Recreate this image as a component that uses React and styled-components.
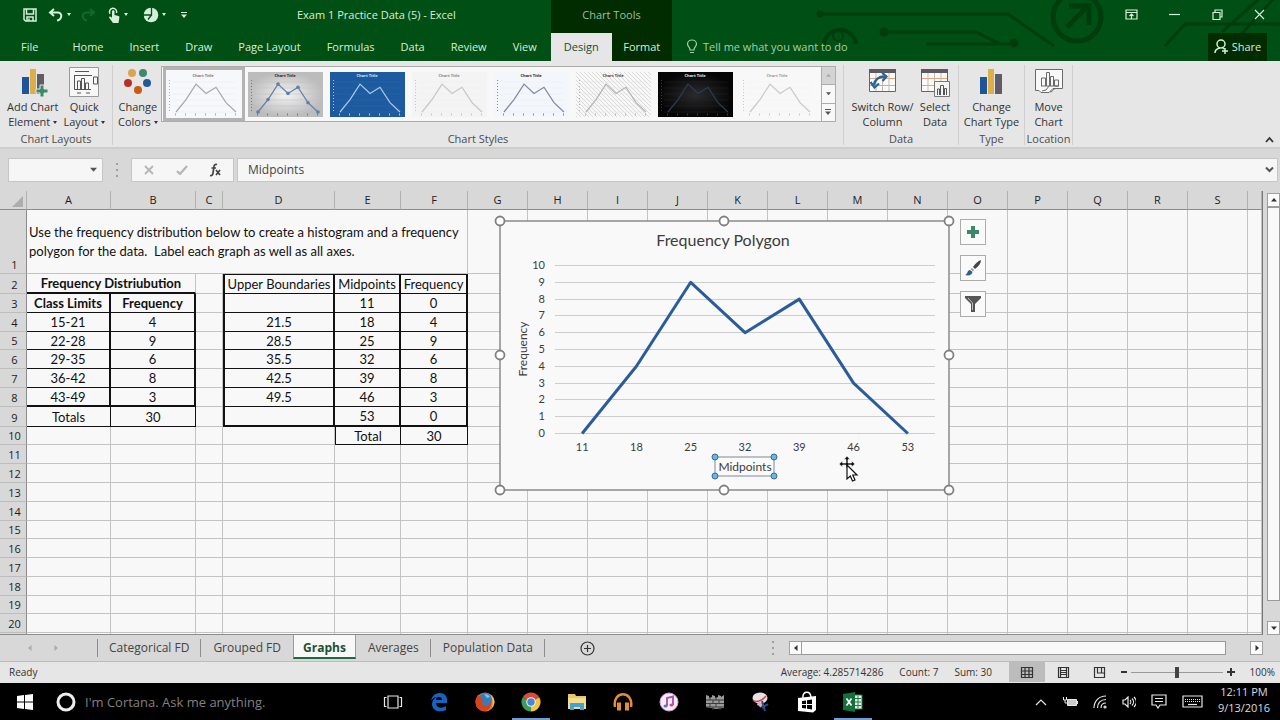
import React from 'react';
import styled, { createGlobalStyle, css } from 'styled-components';

const green = '#004f14';
const darkGreen = '#002c00';
const ribbonGray = '#e6e6e6';
const frameGray = '#d8d8d8';
const line = '#c3c3c5';
const uiFont = '"Open Sans", "Noto Sans", sans-serif';
const cellFont = 'Lato, "Noto Sans", sans-serif';

const GlobalStyle = createGlobalStyle`
  * {
    box-sizing: border-box;
  }
  body {
    margin: 0;
    font-family: ${uiFont};
    font-size: 11px;
    color: #333;
    background: ${frameGray};
  }
  button, input {
    font: inherit;
    color: inherit;
    border: 0;
    padding: 0;
    margin: 0;
    background: none;
    border-radius: 0;
  }
  svg {
    display: block;
    flex: none;
  }
`;

const Window = styled.div`
  display: flex;
  flex-direction: column;
  height: 100vh;
  overflow: hidden;
`;

/* ---------- title bar and tabs ---------- */

const Header = styled.header`
  position: relative;
  display: flex;
  flex: none;
  height: 61px;
  background: ${green};
  color: #d5efd8;
`;

const Circuit = styled.svg`
  position: absolute;
  right: 0;
  top: 0;
`;

const HeaderSide = styled.div`
  position: relative;
  display: flex;
  flex-direction: column;
  width: ${(p) => p.$width || 'auto'};
  flex: ${(p) => (p.$grow ? 1 : 'none')};
`;

const TitleRow = styled.div`
  display: flex;
  align-items: center;
  justify-content: ${(p) => p.$justify || 'flex-start'};
  height: 33px;
  padding-bottom: 4px;
`;

const TabRow = styled.nav`
  display: flex;
  align-items: stretch;
  height: 28px;
`;

const QuickAccess = styled.div`
  display: flex;
  align-items: center;
  gap: 6px;
  width: 297px;
  padding-left: 22px;
`;

const IconButton = styled.button`
  display: flex;
  align-items: center;
  justify-content: center;
  min-width: ${(p) => p.$width || 16}px;
  height: 20px;
`;

const Tab = styled.button`
  padding: 0 ${(p) => (p.$wide ? 21 : 13)}px 2px;
  white-space: nowrap;
  color: ${(p) => (p.$active ? '#1b4a35' : '#d5efd8')};
  background: ${(p) => (p.$active ? ribbonGray : 'none')};
`;

const ContextGroup = styled.div`
  position: relative;
  display: flex;
  flex-direction: column;
  flex: none;
  width: 121px;
  background: ${darkGreen};
  color: #9fbf9f;
  & ${TabRow} > * {
    flex: 1;
    padding: 0 0 2px;
  }
`;

const TellMe = styled.button`
  display: flex;
  align-items: center;
  gap: 5px;
  padding: 0 0 2px 14px;
  color: #a5cfa9;
`;

const ShareButton = styled.button`
  display: flex;
  align-items: center;
  justify-content: center;
  gap: 4px;
  width: 59px;
  margin: 0 13px 0 auto;
  padding-bottom: 2px;
  background: ${darkGreen};
`;

/* ---------- ribbon ---------- */

const Ribbon = styled.div`
  display: flex;
  flex: none;
  height: 88px;
  padding-top: 4px;
  background: ${ribbonGray};
  border-bottom: 2px solid #cdcdcd;
`;

const Group = styled.section`
  display: flex;
  flex-direction: column;
  align-items: center;
  width: ${(p) => p.$width}px;
  height: 80px;
  border-right: 1px solid #cfcfcf;
`;

const GroupBody = styled.div`
  display: flex;
  flex: 1;
  justify-content: ${(p) => (p.$start ? 'flex-start' : 'center')};
  gap: ${(p) => p.$gap || 0}px;
  padding-left: ${(p) => p.$start || 0}px;
  align-self: stretch;
`;

const GroupLabel = styled.div`
  height: 16px;
  line-height: 16px;
  margin-bottom: -2px;
  font-size: 11px;
  color: #4c4c4c;
`;

const BigButton = styled.button`
  display: flex;
  flex-direction: column;
  align-items: center;
  gap: 2px;
  height: 64px;
  padding-top: 2px;
  line-height: 15px;
  white-space: nowrap;
  color: #333;
`;

const Caret = styled.span`
  display: inline-block;
  margin-left: 3px;
  vertical-align: 2px;
  border: 3px solid transparent;
  border-width: 3px 2px 0;
  border-top-color: currentColor;
`;

const Gallery = styled.div`
  display: flex;
  height: 56px;
  margin: 1px 0 0 3px;
  padding-left: 1px;
  background: #f8f8f8;
  border: 1px solid #acacac;
`;

const Thumb = styled.button`
  width: 82px;
  height: 54px;
  display: flex;
  align-items: center;
  justify-content: center;
  border: ${(p) => (p.$selected ? '3px solid #b3b3b3' : '3px solid transparent')};
`;

const GalleryScroll = styled.div`
  display: flex;
  flex-direction: column;
  width: 14px;
  margin-left: 2px;
  border-left: 1px solid #acacac;
  color: #555;
  button {
    flex: 1;
    display: flex;
    align-items: center;
    justify-content: center;
  }
  button + button {
    border-top: 1px solid #acacac;
  }
  button:disabled {
    background: #d4d4d4;
    color: #aaa;
  }
`;

const Collapse = styled.button`
  margin: auto 6px 4px auto;
`;

/* ---------- formula bar ---------- */

const FormulaBar = styled.div`
  display: flex;
  align-items: center;
  flex: none;
  height: 42px;
  padding: 0 2px 1px 8px;
  color: #555;
  background: ${frameGray};
`;

const Field = styled.div`
  display: flex;
  align-items: center;
  height: 24px;
  width: ${(p) => (p.$width ? `${p.$width}px` : 'auto')};
  flex: ${(p) => (p.$grow ? 1 : 'none')};
  justify-content: space-between;
  margin-right: ${(p) => p.$gap || 0}px;
  padding: 0 ${(p) => p.$pad || 3}px;
  background: #f6f6f6;
  border: 1px solid #c6c6c6;
`;

const NameInput = styled.input`
  width: 74px;
`;

const FormulaInput = styled.input`
  flex: 1;
  padding-left: 7px;
  font-size: 12px;
  color: #444;
`;

const Dots = styled.span`
  flex: none;
  width: 2px;
  height: 14px;
  margin: 0 ${(p) => p.$space}px;
  background: repeating-linear-gradient(#a0a0a0 0 2px, transparent 2px 6px);
`;

/* ---------- sheet ---------- */

const SheetArea = styled.main`
  display: flex;
  flex: 1;
  min-height: 0;
  background: ${frameGray};
`;

const SheetView = styled.div`
  position: relative;
  flex: 1;
  overflow: hidden;
  border-right: 1px solid #777;
  border-bottom: 1px solid #8c8c8c;
`;

const Grid = styled.table`
  width: 100%;
  table-layout: fixed;
  border-collapse: separate;
  border-spacing: 0;
  background: #f8f8f8;
  font-family: ${cellFont};
  font-size: 13px;
  color: #111;
`;

const ColHead = styled.th`
  height: 19px;
  padding: 1px 0;
  font: 400 11px/16px ${uiFont};
  background: ${frameGray};
  border-right: 1px solid #b0b0b0;
  border-bottom: 1px solid #8c8c8c;
  color: #1c1c1c;
`;

const RowHead = styled.th`
  padding: 0 0 0 3px;
  height: ${(p) => p.$h}px;
  font: 400 11px/16px ${uiFont};
  vertical-align: bottom;
  background: ${frameGray};
  border-right: 1px solid #8c8c8c;
  border-bottom: 1px solid #bdbdbd;
  color: #1c1c1c;
`;

const edge = (side, width, color) => css`
  border-${side}: ${width}px solid ${color};
`;

const Cell = styled.td`
  padding: 0;
  line-height: 16px;
  text-align: center;
  white-space: nowrap;
  font-weight: ${(p) => (p.$bold ? 700 : 400)};
  ${(p) => edge('right', p.$r || 1, p.$r ? '#111' : line)}
  ${(p) => edge('bottom', p.$b || 1, p.$b ? '#111' : line)}
  ${(p) => (p.$l ? edge('left', p.$l, '#111') : '')}
  ${(p) => (p.$t ? edge('top', p.$t, '#111') : '')}
`;

const NoteCell = styled(Cell)`
  padding-left: 2px;
  text-align: left;
  line-height: 19px;
  white-space: pre;
`;

const Floating = styled.div`
  position: absolute;
  left: ${(p) => p.$x}px;
  top: ${(p) => p.$y}px;
`;

const ChartTools = styled.div`
  display: flex;
  flex-direction: column;
  gap: 10px;
`;

const ChartTool = styled.button`
  display: flex;
  align-items: center;
  justify-content: center;
  width: 26px;
  height: 26px;
  background: #fafafa;
  border: 1px solid #ababab;
`;

const VerticalScroll = styled.div`
  display: flex;
  flex-direction: column;
  width: 13px;
  margin: 2px 0 0 4px;
`;

const ScrollButton = styled.button`
  display: flex;
  align-items: center;
  justify-content: center;
  flex: none;
  width: 13px;
  height: 14px;
  background: #fbfbfb;
  border: 1px solid #a0a0a0;
`;

const ScrollThumb = styled.div`
  flex: 1;
  background: #f9f9f9;
  border: 1px solid #999;
  ${(p) => p.$vertical && 'margin-bottom: 20px;'}
  ${(p) => !p.$vertical && 'height: 14px; margin-right: 24px; border-left: 0;'}
`;

/* ---------- sheet tabs and status bar ---------- */

const SheetTabs = styled.div`
  display: flex;
  flex: none;
  height: 27px;
  align-items: center;
  background: ${frameGray};
  border-bottom: 1px solid #bcbcbc;
`;

const TabNav = styled.div`
  display: flex;
  gap: 20px;
  width: 97px;
  padding-left: 27px;
  color: #aaa;
`;

const SheetTab = styled.button`
  padding: 0 ${(p) => (p.$active ? 9 : 11)}px;
  font-size: 12px;
  line-height: 16px;
  white-space: nowrap;
  color: #444;
  height: 18px;
  ${(p) =>
    !p.$active &&
    css`
      border-left: 1px solid ${p.$first ? '#8c8c8c' : 'transparent'};
      border-right: 1px solid ${p.$plain ? 'transparent' : '#8c8c8c'};
    `}
  ${(p) =>
    p.$active &&
    css`
      align-self: flex-start;
      height: 25px;
      margin-top: -1px;
      padding-top: 4px;
      font-weight: 700;
      color: #1c5233;
      background: #f8f8f8;
      border: 1px solid #9c9c9c;
      border-width: 0 1px;
      border-bottom: 2px solid #1c6b41;
    `}
`;

const HorizontalScroll = styled.div`
  display: flex;
  align-items: center;
  width: 37%;
  margin-right: 17px;
`;

const Spacer = styled.div`
  flex: 1;
`;

const StatusBar = styled.footer`
  display: flex;
  align-items: center;
  flex: none;
  height: 21px;
  padding: 0 5px 1px 9px;
  font-size: 10px;
  color: #333;
  background: ${ribbonGray};
`;

const Stats = styled.div`
  display: flex;
  gap: 16px;
  margin: 0 17px 0 auto;
`;

const ViewButton = styled.button`
  display: flex;
  align-items: center;
  justify-content: center;
  width: 36px;
  height: 20px;
  background: ${(p) => (p.$active ? '#bcbcbc' : 'none')};
`;

const ZoomSlider = styled.input`
  appearance: none;
  width: 92px;
  height: 11px;
  margin: 0 4px;
  background: linear-gradient(#999, #999) center / 100% 1px no-repeat;
  &::-webkit-slider-thumb {
    appearance: none;
    width: 4px;
    height: 11px;
    background: #444;
  }
`;

const ZoomLevel = styled.span`
  margin-left: auto;
`;

const ZoomBox = styled.div`
  display: flex;
  align-items: center;
  width: 158px;
  padding-left: 4px;
`;

/* ---------- taskbar ---------- */

const Taskbar = styled.div`
  display: flex;
  flex: none;
  height: 37px;
  background: #000;
  color: #e8e8e8;
`;

const TaskButton = styled.button`
  display: flex;
  align-items: center;
  justify-content: center;
  width: ${(p) => (p.$start ? 50 : 46)}px;
  ${(p) =>
    p.$running &&
    css`
      background: linear-gradient(#6d9fd6, #6d9fd6) center bottom / 38px 2px no-repeat;
    `}
`;

const Cortana = styled.label`
  display: flex;
  align-items: center;
  gap: 9px;
  width: 320px;
  padding-left: 6px;
`;

const CortanaInput = styled.input`
  flex: 1;
  min-width: 0;
  font-size: 13px;
  &::placeholder {
    color: #808080;
    opacity: 1;
  }
`;

const Tray = styled.div`
  display: flex;
  align-items: center;
  gap: 15px;
  margin-left: auto;
  padding-right: 10px;
`;

const Clock = styled.time`
  font-size: 11px;
  line-height: 16px;
  padding-bottom: 3px;
  text-align: center;
  color: #ddd;
`;

/* ---------- small drawings ---------- */

const Arrow = ({ dir = 'down', size = 6, bar }) => {
  const turn = { down: 0, left: 90, up: 180, right: 270 }[dir];
  return (
    <svg width={size} height={size} viewBox="0 0 6 6" fill="currentColor">
      {bar && <path d="M0 0h6v1H0z" />}
      <path d={bar ? 'M0 2.500h6L3 6z' : 'M0 1.500h6L3 5z'} transform={`rotate(${turn} 3 3)`} />
    </svg>
  );
};

const Stroke = ({ w = 16, h = 16, box, children, width = 1.2, color = 'currentColor' }) => (
  <svg
    width={w}
    height={h}
    viewBox={box || `0 0 ${w} ${h}`}
    fill="none"
    stroke={color}
    strokeWidth={width}
  >
    {children}
  </svg>
);

const SaveIcon = () => (
  <Stroke width={1.5}>
    <path d="M2 2h12v12H3.500L2 12.500zM4.500 2v5h7V2M5 14v-4h6v4M7 11.500v2" />
  </Stroke>
);

const UndoIcon = () => (
  <Stroke width={2}>
    <path d="M6 2L2 5.500L6 9M2.500 5.500H10C15 6 14 12.500 9 13.500" />
  </Stroke>
);

const RedoIcon = () => (
  <Stroke width={2} color="#0f6b2a">
    <path d="M10 2l4 3.500L10 9M13.500 5.500H6C1 6 2 12.500 7 13.500" />
  </Stroke>
);

const TouchIcon = () => (
  <svg width="14" height="16" viewBox="0 0 14 16">
    <path
      d="M5 4.500c0-1.600 2.500-1.600 2.500 0V8l4 1c1 .3 1 1 .8 2l-.8 5H6L2 10.500c0-1 1-1.400 3 .2z"
      fill="currentColor"
    />
    <path d="M3 6.800A3.600 3.600 0 1 1 9.500 6" fill="none" stroke="currentColor" strokeWidth="1.500" />
  </svg>
);

const PieIcon = () => (
  <svg width="16" height="16" viewBox="0 0 16 16">
    <circle cx="8" cy="8" r="7.300" fill="currentColor" />
    <path d="M8.500 0v8H0M8.500 8L5 12.500" stroke={green} strokeWidth="1.300" fill="none" />
  </svg>
);

const CircuitArt = () => (
  <Circuit width="470" height="61" viewBox="810 0 470 61" fill="none" stroke="#003d0c" strokeWidth="3">
    <path d="M820 14h188l46 32M884 32h92l24 12M926 44h88" />
    <path d="M1165 46l20-22h95M1222 32l40-36M1236 40l40-44" />
    <circle cx="820" cy="14" r="2" fill="#003d0c" />
    <circle cx="884" cy="32" r="3" fill="#003d0c" />
    <circle cx="1014" cy="43" r="3" fill="#003d0c" />
    <path d="M824 48A16 16 0 1 1 856 44" strokeWidth="4" />
    <circle cx="838" cy="36" r="5" strokeWidth="2" />
    <circle cx="1077" cy="17" r="24" strokeWidth="5" />
    <path d="M1067 27l22-22M1069 6h20v19" strokeWidth="5" />
  </Circuit>
);

const Bars = ({ plus }) => (
  <svg width="30" height="30" viewBox="0 0 30 30">
    <path d="M4 10h7v17H4z" fill="#1f5597" />
    <path d="M12 2h6v25h-6z" fill="#dcaf4b" />
    <path d="M19 7h7v20h-7z" fill="#605d66" />
    {plus && (
      <path d="M22 18h4v4h4v4h-4v4h-4v-4h-4v-4h4z" fill="#3a8a6a" stroke={ribbonGray} />
    )}
  </svg>
);

const QuickLayoutIcon = () => (
  <svg width="30" height="30" viewBox="0 0 30 30" fill="none" stroke="#555">
    <path d="M.5 .5h29v29H.5z" fill="#f7f7f7" stroke="#999" />
    <path d="M6 4.500h14M5.500 8v14.500H22M5.500 8.500H23M8.500 22v-8h3v8M12.500 22V11.500h3V22M16.500 22v-6h3v6" />
    <path d="M24.500 10h4v7h-4zM8 26h4M17 26h4" />
  </svg>
);

const ColorsIcon = () => (
  <svg width="30" height="30" viewBox="0 0 30 30">
    <circle cx="9" cy="6" r="4" fill="#dba550" />
    <circle cx="20" cy="6" r="4" fill="#3f8a6d" />
    <circle cx="5" cy="16" r="4" fill="#bb3024" />
    <circle cx="24" cy="16" r="4" fill="#23599c" />
    <circle cx="15" cy="23" r="4" fill="#cb5a14" />
  </svg>
);

const TableGlyph = () => (
  <>
    <path d="M1.500 3.500h26v21h-26z" fill="#fafafa" stroke="#666" />
    <path d="M1 2h27v4H1z" fill="#5c5a60" />
    <path d="M2 11.500h25M2 18.500h25" stroke="#dfa77c" />
    <path d="M8 6v18M14.500 6v18M21 6v18" stroke="#c9b9a9" />
  </>
);

const SwitchIcon = () => (
  <svg width="29" height="30" viewBox="0 0 29 30">
    <TableGlyph />
    <path d="M6 18C7 12 11 9.500 17 9.500" fill="none" stroke="#2b6594" strokeWidth="2.500" />
    <path d="M14 5.500l4.500 4l-4 4.500M2.500 15l4 5.500l4.500-4" fill="none" stroke="#2b6594" strokeWidth="2.200" />
  </svg>
);

const SelectDataIcon = () => (
  <svg width="31" height="30" viewBox="0 0 31 30">
    <TableGlyph />
    <path d="M14.500 14.500h15v15h-15z" fill="#f4f4f4" stroke="#777" />
    <path d="M17.500 28v-6h2v6M20.500 28V18.500h3V28M24.500 28v-6.500h2V28" fill="none" stroke="#555" />
  </svg>
);

const MoveChartIcon = () => (
  <svg width="30" height="30" viewBox="0 0 30 30" fill="none" stroke="#6a6a6a">
    <path d="M1.500 2.500h27v19H19l-4 4H7l-2-2H1.500z" fill="#f8f8f8" />
    <path d="M7.500 19v-8h4v8M12.500 19V5.500h3V19M16.500 19V9.500h3V19M20.500 19v-6h4v6zM7 19h18" />
    <path d="M8 24l4-1l3-4M16 25c3 0 3-3 5-3.500" />
  </svg>
);

const peaks = [0, 4, 9, 6, 8, 3, 0];

const themes = [
  { id: 1, bg: '#f7f8fb', ink: '#a3a8b0', text: '#777', grid: '#e6e9f0' },
  { id: 2, bg: 'url(#silver)', ink: '#5f7fa8', text: '#222', grid: '#bdbdbd', dots: true },
  { id: 3, bg: '#1d5a9f', ink: '#a9cbf0', text: '#d9e8fa', grid: '#2c68ab' },
  { id: 4, bg: '#f4f4f4', ink: '#c4c6c8', text: '#888', grid: '#ececec' },
  { id: 5, bg: '#f3f6fb', ink: '#7d89a0', text: '#222', grid: '#e5eaf2' },
  { id: 6, bg: 'url(#hatch)', ink: '#b3b3b3', text: '#444', grid: '#e3e3e3' },
  { id: 7, bg: 'url(#night)', ink: '#2c3d50', text: '#eee', grid: '#26262a' },
  { id: 8, bg: '#f8f8f8', ink: '#c8c8c8', text: '#999', grid: '#f0f0f0' },
];

const ThumbChart = ({ bg, ink, text, grid, dots }) => {
  const pts = peaks.map((v, i) => [10 + i * 10, 40 - v * 3.1]);
  return (
    <svg width="75" height="45" viewBox="0 0 75 45">
      <defs>
        <radialGradient id="silver">
          <stop offset="0" stopColor="#f4f4f4" />
          <stop offset="1" stopColor="#bcbcbc" />
        </radialGradient>
        <radialGradient id="night">
          <stop offset="0" stopColor="#2b2b2e" />
          <stop offset="1" stopColor="#050505" />
        </radialGradient>
        <pattern id="hatch" width="4" height="4" patternUnits="userSpaceOnUse">
          <path d="M0 0l4 4" stroke="#dadada" />
        </pattern>
      </defs>
      <rect width="75" height="45" fill={bg} />
      {[10, 16, 22, 28, 34, 40].map((y) => (
        <path key={y} d={`M6 ${y}h64`} stroke={grid} strokeWidth=".5" />
      ))}
      <path d="M3.500 8v32" stroke={ink} strokeDasharray="1 2" />
      <path d="M9 42.500h62" stroke={ink} strokeDasharray="1 9" strokeWidth="2" />
      <text x="37" y="5" textAnchor="middle" fontSize="4" fontWeight="700" fill={text}>
        Chart Title
      </text>
      <polyline points={pts.join(' ')} fill="none" stroke={ink} strokeWidth="1.200" />
      {dots && pts.map(([x, y]) => <circle key={x} cx={x} cy={y} r="1.800" fill={ink} />)}
    </svg>
  );
};

/* ---------- chart on the sheet ---------- */

const midpoints = [11, 18, 25, 32, 39, 46, 53];
const plot = { left: 55, right: 435, top: 44, bottom: 212 };
const plotX = (i) => plot.left + ((i + 0.5) * (plot.right - plot.left)) / midpoints.length;
const plotY = (v) => plot.bottom - (v * (plot.bottom - plot.top)) / 10;

const ChartSvg = styled.svg`
  overflow: visible;
  font-family: ${cellFont};
  font-size: 12px;
  fill: #3c3c3c;
`;

const Tick = styled.text`
  font-size: 11px;
`;

const FrequencyPolygon = () => (
  <ChartSvg width="449" height="269" role="img" aria-label="Frequency Polygon">
    <rect width="449" height="269" fill="#f9f9f9" stroke="#8a8a8a" strokeWidth="1.500" />
    <text x="223" y="25" textAnchor="middle" fontSize="16">
      Frequency Polygon
    </text>
    {Array.from({ length: 11 }, (_, v) => (
      <g key={v}>
        <path d={`M${plot.left} ${Math.round(plotY(v)) + 0.5}H${plot.right}`} stroke="#cdcdcd" />
        <Tick x="45" y={plotY(v) + 4} textAnchor="end">
          {v}
        </Tick>
      </g>
    ))}
    {midpoints.map((m, i) => (
      <Tick key={m} x={plotX(i)} y="230" textAnchor="middle">
        {m}
      </Tick>
    ))}
    <polyline
      points={peaks.map((v, i) => `${plotX(i)},${plotY(v) + 0.5}`).join(' ')}
      fill="none"
      stroke="#2a5c9c"
      strokeWidth="3"
      strokeLinejoin="round"
    />
    <text transform="translate(27 128) rotate(-90)" textAnchor="middle">
      Frequency
    </text>
    <rect x="215" y="236" width="59" height="19" fill="#fafafa" stroke="#7a8a99" />
    <text x="245" y="250" textAnchor="middle">
      Midpoints
    </text>
    {[215, 274].map((x) =>
      [236, 255].map((y) => (
        <circle key={`${x}${y}`} cx={x} cy={y} r="3" fill="#6fb4dc" stroke="#2f6f9f" />
      ))
    )}
    {[0, 224, 449].map((x) =>
      [0, 134, 269]
        .filter((y) => x !== 224 || y !== 134)
        .map((y) => (
          <circle
            key={`${x}${y}`}
            cx={x}
            cy={y}
            r="4.500"
            fill="#fff"
            stroke="#808080"
            strokeWidth="1.800"
          />
        ))
    )}
    {/* move pointer */}
    <g transform="translate(347 243)" stroke="#fff" strokeWidth=".6" fill="#111">
      <path d="M-8 0l3.500-3v2H-1V-4.500H-3L0-8l3 3.500H1V-1H4.500v-2L8 0L4.500 3V1H1V4H-1V1H-4.500V3z" />
      <path d="M0 1v14l3.300-3l2.200 5l2.500-1l-2.200-5H10z" fill="#fff" stroke="#111" strokeWidth="1.200" />
    </g>
  </ChartSvg>
);

/* ---------- sheet data ---------- */

const columns = [
  ['A', 84],
  ['B', 85],
  ['C', 27],
  ['D', 112],
  ['E', 66],
  ['F', 67],
  ...'GHIJKLMNOPQRS'.split('').map((name) => [name, 60]),
  ['', null],
];

const rowHeights = { 1: 64, 2: 20, 5: 18, 9: 20, 10: 18, 15: 18, 19: 18 };

const values = {
  2: { A: 'Frequency Distriubution', D: 'Upper Boundaries', E: 'Midpoints', F: 'Frequency' },
  3: { A: 'Class Limits', B: 'Frequency', E: 11, F: 0 },
  4: { A: '15-21', B: 4, D: '21.5', E: 18, F: 4 },
  5: { A: '22-28', B: 9, D: '28.5', E: 25, F: 9 },
  6: { A: '29-35', B: 6, D: '35.5', E: 32, F: 6 },
  7: { A: '36-42', B: 8, D: '42.5', E: 39, F: 8 },
  8: { A: '43-49', B: 3, D: '49.5', E: 46, F: 3 },
  9: { A: 'Totals', B: 30, E: 53, F: 0 },
  10: { E: 'Total', F: 30 },
};

const note =
  'Use the frequency distribution below to create a histogram and a frequency\npolygon for the data.  Label each graph as well as all axes.';

const getBorders = (row, col) => {
  if ('AB'.includes(col)) {
    if (row === 2) return { $b: 2 };
    if (row >= 3 && row <= 8) return { $r: 2, $b: row === 8 ? 2 : 1 };
    if (row === 9) return { $r: 1, $b: 1 };
  }
  if ('DEF'.includes(col)) {
    if (row >= 2 && row <= 9) {
      return {
        $r: 2,
        $b: row === 9 ? 2 : 1,
        $l: col === 'D' ? 2 : 0,
        $t: row === 2 ? 1 : 0,
      };
    }
    if (row === 10 && col !== 'D') return { $r: 1, $b: 1, $l: col === 'E' ? 1 : 0 };
  }
  return {};
};

const renderCells = (row) => {
  const cells = [];
  columns.forEach(([col], i) => {
    if (row === 1 && i < 6) {
      if (i === 0) {
        cells.push(
          <NoteCell key="A" colSpan={6}>
            {note}
          </NoteCell>
        );
      }
      return;
    }
    if (row === 2 && col === 'B') return;
    cells.push(
      <Cell
        key={col || 'rest'}
        colSpan={row === 2 && col === 'A' ? 2 : 1}
        $bold={(row === 2 || row === 3) && (col === 'A' || col === 'B')}
        {...(col ? getBorders(row, col) : {})}
      >
        {values[row]?.[col]}
      </Cell>
    );
  });
  return cells;
};

const Worksheet = () => (
  <Grid>
    <colgroup>
      <col width="27" />
      {columns.map(([name, width]) => (
        <col key={name || 'rest'} width={width || undefined} />
      ))}
    </colgroup>
    <thead>
      <tr>
        <ColHead aria-label="Select all">
          <svg width="25" height="15" viewBox="0 0 25 15">
            <path d="M23 3v11H12z" fill="#adadad" />
          </svg>
        </ColHead>
        {columns.map(([name]) => (
          <ColHead key={name || 'rest'}>{name}</ColHead>
        ))}
      </tr>
    </thead>
    <tbody>
      {Array.from({ length: 21 }, (_, i) => i + 1).map((row) => (
        <tr key={row}>
          <RowHead $h={rowHeights[row] || 19}>{row < 21 ? row : ''}</RowHead>
          {renderCells(row)}
        </tr>
      ))}
    </tbody>
  </Grid>
);

/* ---------- taskbar icons ---------- */

const taskIcons = [
  {
    name: 'Task View',
    art: (
      <Stroke w={20} h={16}>
        <path d="M5 2h10v12H5zM3.500 3.500h-2v9h2M16.500 3.500h2v9h-2" />
      </Stroke>
    ),
  },
  {
    name: 'Edge',
    art: (
      <svg width="20" height="20" viewBox="0 0 20 20">
        <path
          d="M2 9C3 3 7 1 11 1c5 0 8 4 7 10H7c0 5 6 6 10 3v4c-6 3-14 1-14-6c0-3 2-6 5-7C5 5 3 7 2 9zm5-1h6c0-4-6-4-6 0z"
          fill="#1464c0"
        />
      </svg>
    ),
  },
  {
    name: 'Firefox',
    art: (
      <svg width="20" height="20" viewBox="0 0 20 20">
        <circle cx="10" cy="10" r="9.500" fill="#e8772a" />
        <circle cx="10" cy="8" r="7" fill="#2f7fc1" />
        <path d="M9 2c3 0 5 1 6 3l-3 1z" fill="#7cc3e8" />
        <path d="M.500 8C1.500 6 2 4 3 3c.5 2 4 3 7 5c-3 0-4 3-2 5c3 2 7 0 8-4c1 5-2 10-7 10S0 14 .500 8z" fill="#d8431a" />
        <path d="M15 2.500c5 3 6 9 2 13c1-4 1-9-2-13z" fill="#f4c24a" />
      </svg>
    ),
  },
  {
    name: 'Chrome',
    running: true,
    art: (
      <svg width="20" height="20" viewBox="0 0 20 20">
        <path d="M10 10L1.800 5.200A9.500 9.500 0 0 1 18.200 5.200z" fill="#dd4b3a" />
        <path d="M10 10L18.200 5.200A9.500 9.500 0 0 1 10 19.500z" fill="#f2c53c" />
        <path d="M10 10V19.500A9.500 9.500 0 0 1 1.800 5.200z" fill="#3f9c56" />
        <circle cx="10" cy="10" r="4.800" fill="#f0f0f0" />
        <circle cx="10" cy="10" r="3.700" fill="#4a86d8" />
      </svg>
    ),
  },
  {
    name: 'File Explorer',
    art: (
      <svg width="20" height="18" viewBox="0 0 20 18">
        <path d="M1 1h7l1 2h10v13H1z" fill="#e8c766" />
        <path d="M1 5h18v11H1z" fill="#f5dc8e" />
        <path d="M3 17v-7h14v7h-4v-3H7v3z" fill="#3fa4d4" />
      </svg>
    ),
  },
  {
    name: 'Audio',
    art: (
      <svg width="20" height="20" viewBox="0 0 20 20" fill="none" stroke="#e08f35">
        <path d="M2 15C-1 -2 21 -2 18 15" strokeWidth="2.500" />
        <path d="M6 10.500v8M14 10.500v8" strokeWidth="4" />
      </svg>
    ),
  },
  {
    name: 'iTunes',
    art: (
      <svg width="20" height="20" viewBox="0 0 20 20">
        <circle cx="10" cy="10" r="9" fill="#f4eef8" stroke="#d8a0cc" />
        <path d="M8 14V6l6-1.500V13" fill="none" stroke="#b455b4" strokeWidth="2" />
        <ellipse cx="6.500" cy="14" rx="2" ry="1.500" fill="#5f6fd8" />
        <ellipse cx="12.500" cy="13" rx="2" ry="1.500" fill="#e0457f" />
      </svg>
    ),
  },
  {
    name: 'Firewall',
    art: (
      <svg width="20" height="18" viewBox="0 0 20 18">
        <path d="M1 2l3 1v2l3-1V2l3 1v2l3-1V2l3 1v1l3-2v13l-8 1l-10-2z" fill="#9a9a9a" />
        <path d="M1 7h18M1 10.500h18M1 14h18M5 4v3M11 4v3M8 7v3M14 7v3M5 10v4M11 10v4M8 14v3M15 14v3" stroke="#3c3c3c" />
      </svg>
    ),
  },
  {
    name: 'Snipping Tool',
    art: (
      <svg width="20" height="20" viewBox="0 0 20 20">
        <ellipse cx="9" cy="6" rx="7.500" ry="5.500" fill="#e9e1e3" />
        <path d="M2 8c3 3 9 1 13-4" stroke="#c44a5a" strokeWidth="1.500" fill="none" />
        <path d="M7 11l4 3" stroke="#d9b0b6" strokeWidth="4" />
        <path d="M11 9l3 10M17 12l-6 4" stroke="#2a4f8e" strokeWidth="2" />
      </svg>
    ),
  },
  {
    name: 'Store',
    art: (
      <svg width="20" height="22" viewBox="0 0 20 22">
        <path d="M1 7l18-2v14l-3 2.500L1 20z" fill="#fff" />
        <path d="M6 7c-1-7 7-8 8-1" fill="none" stroke="#fff" strokeWidth="1.500" />
        <path d="M5 10l4-.6V13H5zM10 9.200l5-.7V13h-5zM5 14h4v3.600L5 17zM10 14h5v4.500l-5-.7z" fill="#000" />
      </svg>
    ),
  },
  {
    name: 'Excel',
    running: true,
    art: (
      <svg width="20" height="20" viewBox="0 0 20 20">
        <path d="M11 3h8v14h-8z" fill="#e9f3ec" stroke="#1b7a44" />
        <path d="M12 6.500h6M12 10h6M12 13.500h6M15 4v12" stroke="#1b7a44" />
        <path d="M0 2l12-2v20L0 18z" fill="#12703a" />
        <path d="M3.500 6.500l5 7M8.500 6.500l-5 7" stroke="#fff" strokeWidth="1.700" />
      </svg>
    ),
  },
];

const TrayIcons = () => (
  <>
    <Stroke w={12} h={8}>
      <path d="M1 7l5-5l5 5" />
    </Stroke>
    <svg width="16" height="12" viewBox="0 0 16 12" fill="none" stroke="currentColor">
      <path d="M5.500 3.500h9v6h-9z" fill="#ccc" />
      <path d="M1.500 1v3h3V1M3 4v3h2M15.500 5v3" />
    </svg>
    <Stroke w={14} h={14}>
      <path d="M1 13C1 6 6 1 13 1M4.500 13c0-5 3-8.500 8.500-8.500M8 13c0-3 2-5 5-5" />
      <circle cx="12" cy="12" r="1" />
    </Stroke>
    <Stroke w={14} h={12}>
      <path d="M1 4h2l3-3v10L3 8H1zM8 4c1 1 1 3 0 4M10 2.500c2 2 2 5 0 7M12 1c3 3 3 7 0 10" />
    </Stroke>
    <Stroke w={16} h={15}>
      <path d="M1 1h14v10H9l-2 3l-2-3H1zM4 4.500h8M4 7.500h8" />
    </Stroke>
    <Stroke w={21} h={13}>
      <path d="M1 1h19v11H1z" />
      <path d="M3 4.500h15M3 6.500h15" strokeDasharray="1 1" />
      <path d="M6 9.500h9" />
    </Stroke>
  </>
);

const tabs = ['File', 'Home', 'Insert', 'Draw', 'Page Layout', 'Formulas', 'Data', 'Review', 'View'];

const App = () => (
  <>
    <GlobalStyle />
    <Window>
      <Header>
        <CircuitArt />
        <HeaderSide $width="551px">
          <TitleRow>
            <QuickAccess>
              <IconButton aria-label="Save"><SaveIcon /></IconButton>
              <IconButton aria-label="Undo" $width={30}><UndoIcon /><Caret /></IconButton>
              <IconButton aria-label="Redo" disabled><RedoIcon /></IconButton>
              <IconButton aria-label="Touch mode" $width={30}><TouchIcon /><Caret /></IconButton>
              <IconButton aria-label="Chart" $width={32}><PieIcon /><Caret /></IconButton>
              <IconButton aria-label="Customize"><Arrow bar /></IconButton>
            </QuickAccess>
            Exam 1 Practice Data (5) - Excel
          </TitleRow>
          <TabRow>
            {tabs.map((name) => (
              <Tab key={name} $wide={name === 'File'}>{name}</Tab>
            ))}
          </TabRow>
        </HeaderSide>
        <ContextGroup>
          <TitleRow $justify="center">Chart Tools</TitleRow>
          <TabRow>
            <Tab $active>Design</Tab>
            <Tab>Format</Tab>
          </TabRow>
        </ContextGroup>
        <HeaderSide $grow>
          <TitleRow $justify="flex-end">
            <IconButton aria-label="Ribbon display options" $width={43}>
              <Stroke w={13} h={11}>
                <path d="M1 1h11v9H1zM1 3.500h11M6.500 10V5.500M4.500 7l2-2l2 2" />
              </Stroke>
            </IconButton>
            <IconButton aria-label="Minimize" $width={43}>
              <Stroke w={11} h={11}><path d="M0 5.500h11" /></Stroke>
            </IconButton>
            <IconButton aria-label="Restore" $width={43}>
              <Stroke w={11} h={11}><path d="M1 3.500h7v7H1zM3 3V1h7v7H8" /></Stroke>
            </IconButton>
            <IconButton aria-label="Close" $width={41}>
              <Stroke w={11} h={11}><path d="M1 1l9 9M10 1l-9 9" /></Stroke>
            </IconButton>
          </TitleRow>
          <TabRow>
            <TellMe>
              <Stroke w={12} h={15}>
                <path d="M4 11C4 8 1.500 7.500 1.500 5a4.500 4 0 0 1 9 0C10.500 7.500 8 8 8 11zM4 13.500h4" />
              </Stroke>
              Tell me what you want to do
            </TellMe>
            <ShareButton>
              <Stroke w={14} h={15} width={1.500}>
                <circle cx="7" cy="5" r="4" />
                <path d="M1 14c0-3 2-4.500 5-5M8 8l2 2M8 12h6M11 9v6" />
              </Stroke>
              Share
            </ShareButton>
          </TabRow>
        </HeaderSide>
      </Header>

      <Ribbon>
        <Group $width={113}>
          <GroupBody $gap={5} $start={7}>
            <BigButton>
              <Bars plus />
              <span>Add Chart<br />Element<Caret /></span>
            </BigButton>
            <BigButton>
              <QuickLayoutIcon />
              <span>Quick<br />Layout<Caret /></span>
            </BigButton>
          </GroupBody>
          <GroupLabel>Chart Layouts</GroupLabel>
        </Group>
        <Group $width={731}>
          <GroupBody $start={5}>
            <BigButton>
              <ColorsIcon />
              <span>Change<br />Colors<Caret /></span>
            </BigButton>
            <Gallery>
              {themes.map((theme) => (
                <Thumb key={theme.id} $selected={theme.id === 1} aria-label={`Style ${theme.id}`}>
                  <ThumbChart {...theme} />
                </Thumb>
              ))}
              <GalleryScroll>
                <button disabled aria-label="Scroll up"><Arrow dir="up" size={5} /></button>
                <button aria-label="Scroll down"><Arrow size={5} /></button>
                <button aria-label="More styles"><Arrow bar /></button>
              </GalleryScroll>
            </Gallery>
          </GroupBody>
          <GroupLabel>Chart Styles</GroupLabel>
        </Group>
        <Group $width={115}>
          <GroupBody $gap={6}>
            <BigButton>
              <SwitchIcon />
              <span>Switch Row/<br />Column</span>
            </BigButton>
            <BigButton>
              <SelectDataIcon />
              <span>Select<br />Data</span>
            </BigButton>
          </GroupBody>
          <GroupLabel>Data</GroupLabel>
        </Group>
        <Group $width={66}>
          <GroupBody>
            <BigButton>
              <Bars />
              <span>Change<br />Chart Type</span>
            </BigButton>
          </GroupBody>
          <GroupLabel>Type</GroupLabel>
        </Group>
        <Group $width={48}>
          <GroupBody>
            <BigButton>
              <MoveChartIcon />
              <span>Move<br />Chart</span>
            </BigButton>
          </GroupBody>
          <GroupLabel>Location</GroupLabel>
        </Group>
        <Collapse aria-label="Collapse ribbon">
          <Stroke w={9} h={7} width={1.800}><path d="M1 6l3.500-4L8 6" /></Stroke>
        </Collapse>
      </Ribbon>

      <FormulaBar>
        <Field $width={95} $pad={5}>
          <NameInput aria-label="Name box" />
          <Arrow size={7} />
        </Field>
        <Dots $space={13} />
        <Field $width={103} $gap={3} $pad={12}>
          <Stroke w={10} h={10} width={1.800} color="#b5b5b5"><path d="M1 1l8 8M9 1L1 9" /></Stroke>
          <Stroke w={12} h={10} width={2.200} color="#b5b5b5"><path d="M1 6l3 3l7-8" /></Stroke>
          <Stroke w={12} h={14} width={1.700} color="#444">
            <path d="M8 1.500C4 0 5 6 4 10c-.3 2-1 3-3 2.500M2.500 5H7M7 7l4 5M11 7l-4 5" />
          </Stroke>
        </Field>
        <Field $grow>
          <FormulaInput aria-label="Formula bar" defaultValue="Midpoints" />
          <Stroke w={9} h={7} width={2}><path d="M1 1.500L4.500 5L8 1.500" /></Stroke>
        </Field>
      </FormulaBar>

      <SheetArea>
        <SheetView>
          <Worksheet />
          <Floating $x={500} $y={30}>
            <FrequencyPolygon />
          </Floating>
          <Floating $x={960} $y={28}>
            <ChartTools>
              <ChartTool aria-label="Chart elements">
                <svg width="14" height="14" viewBox="0 0 14 14">
                  <path d="M5 1h4v4h4v4H9v4H5V9H1V5h4z" fill="#3a8a6a" />
                </svg>
              </ChartTool>
              <ChartTool aria-label="Chart styles">
                <svg width="18" height="18" viewBox="0 0 18 18">
                  <path d="M17 1c0 3-2 6-6 9L9 8c2-3 5-6 8-7z" fill="#444" />
                  <path d="M8 9l2 2l-1 1.500L6.500 10z" fill="#999" />
                  <path d="M1 16c3-1 2-5 5-5l2.500 2C8 16 5 17 1 16z" fill="#2f5f8f" />
                </svg>
              </ChartTool>
              <ChartTool aria-label="Chart filters">
                <svg width="18" height="18" viewBox="0 0 18 18">
                  <path d="M1 1h16v2l-6 6v8H7V9L1 3z" fill="#555" />
                  <path d="M4 3l4.500 5v7" fill="none" stroke="#bbb" />
                </svg>
              </ChartTool>
            </ChartTools>
          </Floating>
        </SheetView>
        <VerticalScroll>
          <ScrollButton aria-label="Scroll up"><Arrow dir="up" /></ScrollButton>
          <ScrollThumb $vertical />
          <ScrollButton aria-label="Scroll down"><Arrow /></ScrollButton>
        </VerticalScroll>
      </SheetArea>

      <SheetTabs>
        <TabNav>
          <Arrow dir="left" />
          <Arrow dir="right" />
        </TabNav>
        <SheetTab $first>Categorical FD</SheetTab>
        <SheetTab $plain>Grouped FD</SheetTab>
        <SheetTab $active>Graphs</SheetTab>
        <SheetTab>Averages</SheetTab>
        <SheetTab>Population Data</SheetTab>
        <IconButton aria-label="New sheet" $width={86}>
          <Stroke w={15} h={15}>
            <circle cx="7.500" cy="7.500" r="6.500" />
            <path d="M4 7.500h7M7.500 4v7" />
          </Stroke>
        </IconButton>
        <Spacer />
        <Dots $space={15} />
        <HorizontalScroll>
          <ScrollButton aria-label="Scroll left"><Arrow dir="left" /></ScrollButton>
          <ScrollThumb />
          <ScrollButton aria-label="Scroll right"><Arrow dir="right" /></ScrollButton>
        </HorizontalScroll>
      </SheetTabs>

      <StatusBar>
        Ready
        <Stats>
          <span>Average: 4.285714286</span>
          <span>Count: 7</span>
          <span>Sum: 30</span>
        </Stats>
        <ViewButton $active aria-label="Normal view">
          <Stroke w={14} h={13}><path d="M1.500 1.500h11v10h-11zM5 1v11M9 1v11M1 5h12M1 8.500h12" /></Stroke>
        </ViewButton>
        <ViewButton aria-label="Page layout view">
          <Stroke w={13} h={13}><path d="M1.500 1.500h10v10h-10zM4 4.500h5M4 6.500h5M4 8.500h5M3.500 2v9.500M9.500 2v9.500" /></Stroke>
        </ViewButton>
        <ViewButton aria-label="Page break view">
          <Stroke w={13} h={13}><path d="M1.500 1.500h10v10h-10zM4.500 1v6h4V1M8.500 7h3" /></Stroke>
        </ViewButton>
        <ZoomBox>
          <Stroke w={6} h={8} width={2}><path d="M0 4h6" /></Stroke>
          <ZoomSlider type="range" aria-label="Zoom" />
          <Stroke w={8} h={8} width={2}><path d="M0 4h8M4 0v8" /></Stroke>
          <ZoomLevel>100%</ZoomLevel>
        </ZoomBox>
      </StatusBar>

      <Taskbar>
        <TaskButton aria-label="Start" $start>
          <svg width="16" height="16" viewBox="0 0 16 16" fill="#fff">
            <path d="M0 2l7-1v6.500H0zM8 1l8-1v7.500H8zM0 8.500h7V15l-7-1zM8 8.500h8V16l-8-1z" />
          </svg>
        </TaskButton>
        <Cortana>
          <Stroke w={20} h={20} width={3} color="#eee"><circle cx="10" cy="10" r="8" /></Stroke>
          <CortanaInput aria-label="Search" placeholder="I'm Cortana. Ask me anything." />
        </Cortana>
        {taskIcons.map(({ name, running, art }) => (
          <TaskButton key={name} aria-label={name} $running={running}>{art}</TaskButton>
        ))}
        <Tray>
          <TrayIcons />
          <Clock>12:11 PM<br />9/13/2016</Clock>
        </Tray>
      </Taskbar>
    </Window>
  </>
);

export default App;
